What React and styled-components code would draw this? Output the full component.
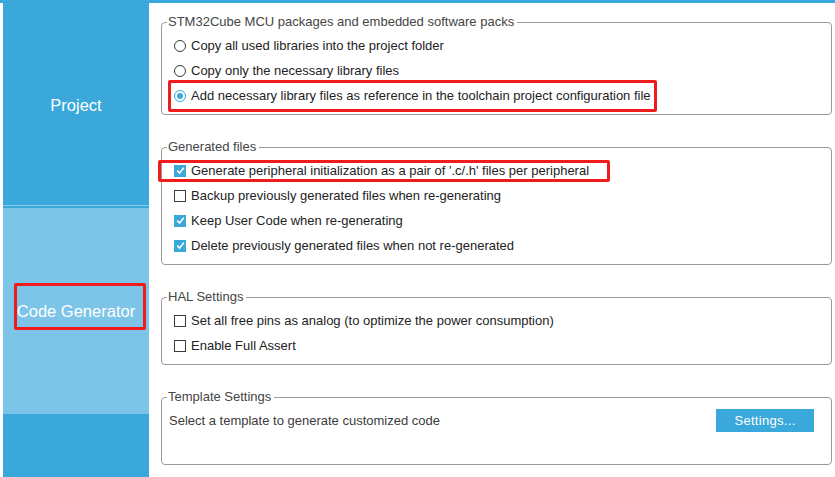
import React from "react";
import styled, { createGlobalStyle } from "styled-components";

const Global = createGlobalStyle`
  html, body {
    margin: 0;
    padding: 0;
    background: #fff;
  }
  body {
    font-family: "Liberation Sans", Arial, sans-serif;
    font-size: 13px;
  }
`;

const Page = styled.div`
  width: 835px;
  height: 477px;
  display: flex;
  flex-direction: column;
  overflow: hidden;
  border-top: 3px solid #3aa8db;
  box-sizing: border-box;
`;

const Body = styled.div`
  flex: 1;
  display: flex;
  padding-left: 3px;
`;

const Sidebar = styled.nav`
  width: 146px;
  background: #3aa8db;
  display: flex;
  flex-direction: column;
`;

const Tab = styled.div`
  height: ${p => p.$h}px;
  box-sizing: border-box;
  padding-top: ${p => p.$dy || 0}px;
  background: ${p => (p.$active ? "#7dc5e8" : "#3aa8db")};
  border-bottom: ${p => (p.$line ? "1px solid #8dcdec" : "none")};
  margin-bottom: ${p => (p.$line ? "2px" : "0")};
  display: flex;
  align-items: center;
  justify-content: center;
  color: #fff;
  font-size: 16.5px;
`;

const TabLabel = styled.span`
  position: relative;
  line-height: 20px;
`;

const Mark = styled.span`
  position: absolute;
  left: ${p => p.$l}px;
  top: ${p => p.$t}px;
  width: ${p => p.$w}px;
  height: ${p => p.$h}px;
  border: 3px solid #f21b1b;
  border-radius: 2px;
  box-sizing: border-box;
  pointer-events: none;
`;

const Main = styled.main`
  flex: 1;
  display: flex;
  flex-direction: column;
  gap: 25px;
  padding: 12px 3px 0 12px;
`;

const Group = styled.fieldset`
  margin: 0;
  padding: 4px 0 6px 11px;
  border: 1px solid #9a9a9a;
  border-radius: 4px;
  min-width: 0;
`;

const Legend = styled.legend`
  margin-left: -6px;
  padding: 0 3px 0 1px;
  color: #454545;
  line-height: 14px;
`;

const Row = styled.div`
  position: relative;
  height: 25px;
  display: flex;
  align-items: center;
  gap: 5px;
  color: #232323;
  padding-left: 1px;
`;

const Radio = styled.span`
  width: 12px;
  height: 12px;
  border-radius: 50%;
  border: 1px solid ${p => (p.$on ? "#3aa8db" : "#3a3a3a")};
  box-sizing: border-box;
  display: flex;
  align-items: center;
  justify-content: center;
  &::after {
    content: "";
    width: 6px;
    height: 6px;
    border-radius: 50%;
    background: ${p => (p.$on ? "#3aa8db" : "transparent")};
  }
`;

const Box = styled.span`
  width: 12px;
  height: 12px;
  box-sizing: border-box;
  background: ${p => (p.$on ? "#3aa8db" : "#fff")};
  border: 1px solid ${p => (p.$on ? "#3aa8db" : "#3a3a3a")};
  display: flex;
  align-items: center;
  justify-content: center;
`;

const Template = styled.div`
  min-height: 50px;
  padding-right: 17px;
`;

const TemplateRow = styled.div`
  height: 25px;
  display: flex;
  align-items: center;
  justify-content: space-between;
  color: #3c3c3c;
  margin-left: -4px;
`;

const Button = styled.button`
  width: 98px;
  height: 23px;
  border: none;
  background: #3aa8db;
  color: #fff;
  font-family: "Liberation Sans", Arial, sans-serif;
  font-size: 13px;
  letter-spacing: 0.3px;
  padding: 0;
  cursor: pointer;
`;

const Check = ({ on }) => (
  <Box $on={on}>
    {on && (
      <svg width="9" height="9" viewBox="0 0 9 9">
        <path d="M1.2 4.6 L3.6 7 L7.8 1.8" fill="none" stroke="#fff" strokeWidth="1.6" />
      </svg>
    )}
  </Box>
);

const packs = [
  "Copy all used libraries into the project folder",
  "Copy only the necessary library files",
  "Add necessary library files as reference in the toolchain project configuration file",
];

const generated = [
  ["Generate peripheral initialization as a pair of '.c/.h' files per peripheral", true],
  ["Backup previously generated files when re-generating", false],
  ["Keep User Code when re-generating", true],
  ["Delete previously generated files when not re-generated", true],
];

const hal = [
  ["Set all free pins as analog (to optimize the power consumption)", false],
  ["Enable Full Assert", false],
];

export default function App() {
  return (
    <>
      <Global />
      <Page>
        <Body>
          <Sidebar>
            <Tab $h={203} $dy={3} $line>Project</Tab>
            <Tab $h={206} $active>
              <TabLabel>
                Code Generator
                <Mark $l={-3} $t={-18} $w={132} $h={47} />
              </TabLabel>
            </Tab>
          </Sidebar>
          <Main>
            <Group>
              <Legend>STM32Cube MCU packages and embedded software packs</Legend>
              {packs.map((t, i) => (
                <Row key={t}>
                  <Radio $on={i === 2} />
                  {t}
                  {i === 2 && <Mark $l={-5} $t={-3} $w={489} $h={32} />}
                </Row>
              ))}
            </Group>
            <Group>
              <Legend>Generated files</Legend>
              {generated.map(([t, on], i) => (
                <Row key={t}>
                  <Check on={on} />
                  {t}
                  {i === 0 && <Mark $l={-15} $t={2} $w={452} $h={22} />}
                </Row>
              ))}
            </Group>
            <Group>
              <Legend>HAL Settings</Legend>
              {hal.map(([t, on]) => (
                <Row key={t}>
                  <Check on={on} />
                  {t}
                </Row>
              ))}
            </Group>
            <Group>
              <Legend>Template Settings</Legend>
              <Template>
                <TemplateRow>
                  Select a template to generate customized code
                  <Button>Settings...</Button>
                </TemplateRow>
              </Template>
            </Group>
          </Main>
        </Body>
      </Page>
    </>
  );
}
